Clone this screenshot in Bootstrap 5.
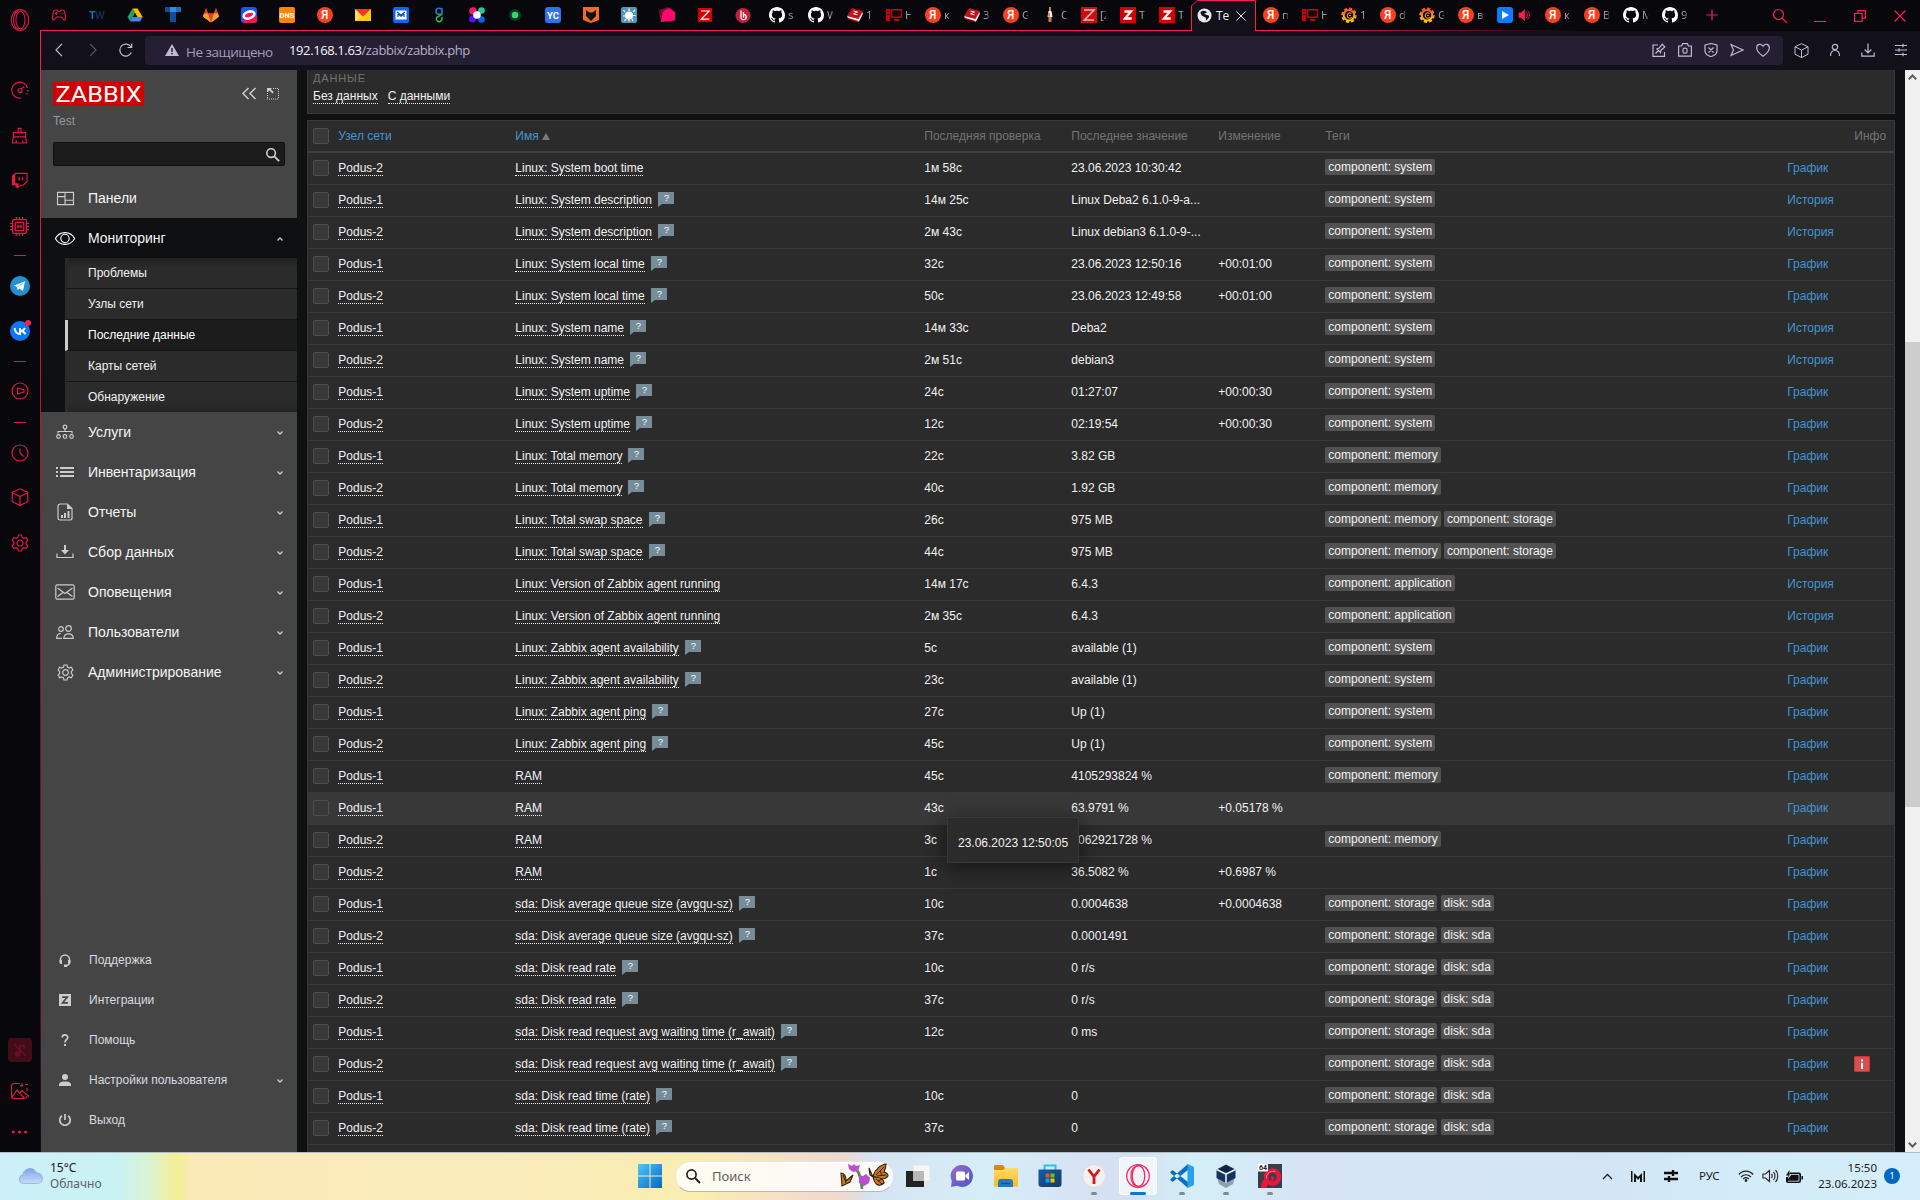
<!DOCTYPE html>
<html lang="ru">
<head>
<meta charset="utf-8">
<title>Test: Последние данные</title>
<meta name="viewport" content="width=device-width, initial-scale=1">
<link href="https://cdn.jsdelivr.net/npm/bootstrap@5.3.0/dist/css/bootstrap.min.css" rel="stylesheet">
<style>
:root{--gx:#fa1e4e;--gxd:#e01b46;--page:#0e1012;--panel:#2b2b2b;--line:#383838;--side:#454545}
html,body{height:100%}
body{margin:0;width:1920px;height:1200px;overflow:hidden;background:var(--page);font:12px/16px "Liberation Sans",Arial,sans-serif;color:#f2f2f2}
svg{display:block;flex:none;overflow:visible}
.ln{fill:none;stroke:currentColor;stroke-width:1.2}
.screen-top{height:1152px}
/* browser rail */
.rail{width:40px;background:#07070c;color:var(--gxd);padding-top:10px}
.rail-slot{width:39px;flex:none}
.rail-dash{width:12px;height:1px;background:var(--gxd);margin:0 14px}
.rail-mute{width:24px;height:24px;border-radius:4px;background:#430c19;color:#6a1024;margin-left:8px}
.vk-box{position:relative}
.vk-dot{position:absolute;right:-1px;top:-1px;width:6px;height:6px;border-radius:50%;background:#fa1e4e}
/* tab strip */
.browser{width:1880px}
.strip{height:31px;background:#07070c;position:relative;font:12px/16px "Open Sans","Noto Sans",sans-serif;color:#a3a3ab}
.strip::after{content:"";position:absolute;left:0;right:0;bottom:0;height:1px;background:linear-gradient(90deg,var(--gx) 66%,rgba(250,30,78,0) 82%)}
.pin{width:38px;height:30px;flex:none;color:var(--gxd)}
.tabx{width:39px;height:30px;flex:none;padding-left:7px;white-space:nowrap}
.tabx span{width:9px;margin-left:3px;font-size:11.5px;-webkit-mask-image:linear-gradient(90deg,#000 45%,transparent 75%);mask-image:linear-gradient(90deg,#000 45%,transparent 75%)}
.tab-live{width:65px;height:31px;position:relative;z-index:2;color:#e8e8ee;padding-left:6px;flex:none}
.tab-live>svg:first-child{position:absolute;left:0;top:0}
.tab-live span{width:13px;margin-left:4px;position:relative}
.tab-live svg{position:relative}
.winbtn{color:var(--gx)}
.winslot{width:40px}
.toolbar{height:39px;background:#121019;color:#c0b9d6;padding:4px 0 5px 0}
.nav-back{margin-left:15px}.nav-fwd{margin:0 22px 0 26px;color:#5b566b}
.addr{width:1638px;height:29px;margin-left:12px;background:#241f33;border-radius:4px;padding:0 7px 0 20px;font-family:"Open Sans","Noto Sans",sans-serif}
.addr .warn-txt{font-size:13.5px;color:#a49dbb;margin-left:7px;width:103px;letter-spacing:-.5px;padding-top:3px}
.addr .url{font-size:13px;color:#b6b0c8;letter-spacing:-.39px}
.addr .url b{font-weight:500;color:#f4f2fa}
.tool{width:26px}
.ext-tools{margin-left:11px;gap:19px}
.edge{border-left:1px solid transparent;position:relative}
.edge::before{content:"";position:absolute;z-index:3;left:-1px;top:-39px;height:1121px;width:1px;background:linear-gradient(#fa1e4e,#b31538 35%,#4a0c1c 88%,rgba(60,8,20,0))}
/* zabbix sidebar */
.zside{width:256px;background:var(--side);height:1082px}
.zhead{padding:12px 18px 0 12px}
.zhead-ic{margin-top:4px;color:#ccc}
.zlogo{width:91px;height:24px;background:#d40000}
.zlogo text{font:400 22px Roboto,"Liberation Sans",sans-serif;fill:#fff}
.zname{padding:7px 12px 13px;height:36px;color:#8d979e}
.zsearch{margin:0 12px;height:24px;background:#1c1c1c;border:1px solid #0b1013;border-radius:2px;padding-right:4px;color:#ccc}
.mitem{height:40px;padding-left:12px;font-size:14px;color:#f5f5f5}
.mitem>span,.bitem>span{flex:1}
.micon{width:24px;margin-right:11px;display:flex;justify-content:center;color:#ccc}
.chev{margin:2px 14px 0 0;color:#ccc}
.mopen{background:#0e0f10}
.msub{background:#0e1012;padding-left:24px}
.msub .sublink{display:block;height:31px;line-height:31px;padding-left:20px;border-left:3px solid var(--panel);background:var(--panel);border-bottom:1px solid #161616;color:#f2f2f2;text-decoration:none}
.msub .sublink:first-child{background:linear-gradient(#202020,var(--panel) 10px);border-left-color:#282828}
.msub .sublink:last-child{height:30px;border-bottom:0;background:linear-gradient(var(--panel) 20px,#232323)}
.msub .sublink.cur{background:#1c1c1c;border-left-color:#ccc;color:#fff}
.bitem{height:40px;padding-left:12px;font-size:12px;color:#d8dce0}
.bitem .micon{margin-right:12px}
/* main */
.zmain{width:1608px;padding:0 0 0 10px;background:var(--page);height:1082px;overflow:hidden;position:relative}
.zfilter{width:1588px;height:44px;background:var(--panel);border:1px solid var(--line);border-top:0;padding-left:5px}
.zfilter h6{margin:0;font:11px/16px "Liberation Sans",sans-serif;letter-spacing:.85px;color:#737373}
.lk{color:#f2f2f2;text-decoration:none;border-bottom:1px dotted #f2f2f2;line-height:14px;display:inline-block}
.zbox{width:1588px;margin-top:6px;border:1px solid var(--line);background:var(--panel);height:1040px;overflow:hidden}
.ztable{table-layout:fixed;width:1586px;border-collapse:separate;border-spacing:0;margin:0;--bs-table-bg:transparent;--bs-table-color:#f2f2f2;color:#f2f2f2}
.ztable th,.ztable td{height:32px;padding:0 5px 1px 5.3px;border:0;border-bottom:1px solid var(--line);vertical-align:middle;white-space:nowrap;overflow:hidden;line-height:16px;box-shadow:none;color:#f2f2f2}
.ztable thead th{border-bottom:2px solid #414141;font-weight:400;color:#737373;padding-bottom:0}
.ztable th:first-child,.ztable td:first-child{padding-left:5px}
.ztable a.act{color:#4594d0;text-decoration:none}
.ztable tr.hov td{background:#383838}
.ztable .lk{vertical-align:top;padding-top:1px;line-height:14px}
.cbx{display:block;width:16px;height:16px;border:1px solid #4f4f4f;background:#383838;border-radius:2px}
.hint{display:inline-block;margin-left:6px;vertical-align:top}
#hinti text{font:9.5px "Liberation Sans",sans-serif;fill:#fff}
.tagx{display:inline-block;background:#525252;border-radius:2px;height:16px;line-height:16px;padding:0 3px;margin-right:3.2px;vertical-align:top;position:relative;top:-1px}
.infox{width:16px;height:16px;background:#d64e4e;border:1px solid #c23636;border-radius:1px}
.ztip{position:absolute;left:650px;top:747px;width:132px;height:46px;padding-left:10px;line-height:50px;background:var(--panel);border:1px solid #383838;box-shadow:0 4px 20px rgba(0,0,0,.55);z-index:5}
.zscroll{width:15px;background:#f0f0f0;color:#606060;height:1082px}
.sc-up{height:272px;padding:4px 3px}
.zthumb{height:465px;background:#cdcdcd}
.sc-dn{height:345px;padding:335px 3px 0}
/* windows taskbar */
.taskbar{height:48px;border-top:1px solid #b3bcc4;padding-bottom:1px;color:#1b1b1b;font:12px/16px "Noto Sans","Open Sans",sans-serif;background:linear-gradient(90deg,#cdeff8 0,#c9f3f3 120px,#dcf3d0 150px,#f5ee93 178px,#faeab8 190px,#faebbb 500px,#f9edb0 700px,#f4dfc8 790px,#eed9cf 845px,#d6e3f2 870px,#d5eef8 985px,#d7e2f3 1080px,#d4e0f2 1130px,#d4eff8 1200px,#d6e4f4 1300px,#d3e5f5 1600px,#d2ecf8 1750px,#d5eef9 1920px)}
.tb-left{width:631px;padding-left:18px}
.tb-search{width:219px;height:31px;border-radius:16px;background:rgba(255,255,255,.82);border:1px solid rgba(190,190,190,.35);border-bottom-color:#b8b8b8;margin-left:6px;margin-right:2px;padding:0 4px 0 9px;color:#5d5d5d;font-size:13px}
.tb-app{width:44px;height:46px;position:relative}
.tb-app i{position:absolute;left:19px;bottom:4px;width:6px;height:3px;border-radius:2px;background:#838a91}
.tb-app.on i{left:14px;width:16px;background:#0078d4}
.tb-app.on::before{content:"";position:absolute;left:3px;top:4px;width:38px;height:38px;border-radius:4px;background:rgba(255,255,255,.65);border:1px solid rgba(255,255,255,.7)}
.tb-app svg{position:relative}
.tray>*{flex:none}
.tray-txt{font-size:11.5px}
.tb-badge{width:16px;height:16px;border-radius:50%;background:#0067c0;color:#fff;font-size:9px;line-height:16px;text-align:center}
</style>
<script src="https://cdn.jsdelivr.net/npm/bootstrap@5.3.0/dist/js/bootstrap.bundle.min.js"></script>
</head>
<body>
<svg width="0" height="0" class="position-absolute">
<defs>
<linearGradient id="gBlue" x1="0" y1="0" x2="1" y2="1"><stop offset="0" stop-color="#53c6f6"/><stop offset="1" stop-color="#0067c8"/></linearGradient>
<linearGradient id="gChat" x1="0" y1="0" x2="1" y2="1"><stop offset="0" stop-color="#9a6cc8"/><stop offset="1" stop-color="#4a55c8"/></linearGradient>
<linearGradient id="gFold" x1="0" y1="0" x2="0" y2="1"><stop offset="0" stop-color="#ffdc6b"/><stop offset="1" stop-color="#fbb91f"/></linearGradient>
<linearGradient id="gStore" x1="0" y1="0" x2="1" y2="1"><stop offset="0" stop-color="#0c5fa8"/><stop offset="1" stop-color="#1b3764"/></linearGradient>
<linearGradient id="gCloud" x1="0" y1="0" x2="0" y2="1"><stop offset="0" stop-color="#7ea5ea"/><stop offset="1" stop-color="#c9dcf8"/></linearGradient>
<linearGradient id="gGraf" x1="0" y1="0" x2="0" y2="1"><stop offset="0" stop-color="#f05a28"/><stop offset="1" stop-color="#fbca0a"/></linearGradient>
<linearGradient id="gS" x1="0" y1="0" x2="0" y2="1"><stop offset="0" stop-color="#1c6fd8"/><stop offset="1" stop-color="#38c44a"/></linearGradient>

<symbol id="pad" viewBox="0 0 16 16"><path class="ln" d="M4 3h2l1 1.500h2L10 3h2c1 0 1.500 1 1.800 2.500L14.600 11c.2 2-1.600 2.500-2.600 1L10.500 10h-5L4 12c-1 1.500-2.800 1-2.600-1l.8-5.500C2.500 4 3 3 4 3z"/><path class="ln" d="M5.300 5v3M3.800 6.500h3M9.500 6.500h.9M11.500 6.500h.9"/></symbol>
<symbol id="tw" viewBox="0 0 16 16"><text x="0" y="12" font-family="Roboto" font-size="11" font-weight="700" fill="#1a74aa">T</text><text x="6" y="12" font-family="Roboto" font-size="11" font-weight="500" fill="#1b2f50">W</text></symbol>
<symbol id="drive" viewBox="0 0 16 16"><path fill="#1ea362" d="M5.500 1.500 8 6 3.200 14 .5 10z"/><path fill="#ffba00" d="M5.500 1.500h5L15.700 10h-5.200z"/><path fill="#4285f4" d="M5.400 10h10.300L13 14.500H2.900z"/></symbol>
<symbol id="tt" viewBox="0 0 16 16"><path fill="#1b6fc0" d="M0 0h16v5H0z"/><path fill="#0f4f94" d="M0 0h5v5H0zM5 5h6v10H5z"/><path fill="#2f8be0" d="M5 0h6v5H5z"/></symbol>
<symbol id="gitlab" viewBox="0 0 16 16"><path fill="#e24329" d="M8 15.500 0 9.500 3 .5l2.200 6h5.600l2.200-6 3 9z"/><path fill="#fc6d26" d="M8 15.500 3.500 9 0 9.500zM8 15.500 12.500 9l3.500.5z"/><path fill="#fca326" d="M0 9.500 1 6.500h4.200L8 15.500zM16 9.500l-1-3h-4.200L8 15.500z"/><path fill="#e24329" d="M5.200 6.500h5.600L8 15.500z"/></symbol>
<symbol id="ozon" viewBox="0 0 16 16"><rect width="16" height="16" rx="3" fill="#0b5bff"/><path d="M2 12 16 9v4a3 3 0 0 1-3 3H3z" fill="#f91155"/><ellipse cx="8" cy="8" rx="5.500" ry="3.300" fill="#f91155" stroke="#fff" stroke-width="2.600" transform="rotate(-20 8 8)"/></symbol>
<symbol id="dns" viewBox="0 0 16 16"><rect width="16" height="16" rx="2" fill="#fc8507"/><text x="8" y="10.800" text-anchor="middle" font-family="Roboto" font-size="7.500" font-weight="700" fill="#fff">DNS</text></symbol>
<symbol id="ya" viewBox="0 0 16 16"><circle cx="8" cy="8" r="8" fill="#fc3f1d"/><text x="7.800" y="12.200" text-anchor="middle" font-family="Roboto" font-size="12" font-weight="500" fill="#fff">Я</text></symbol>
<symbol id="ymail" viewBox="0 0 16 16"><path fill="#ffcc00" d="M0 2h16v12H0z"/><path fill="#fff2a0" d="M0 2l8 8-8 4z" opacity=".5"/><path fill="#f8352c" d="M0 2h16L8 9.500z"/></symbol>
<symbol id="bmail" viewBox="0 0 16 16"><rect width="16" height="16" rx="2" fill="#0a66ff"/><rect x="2.500" y="3.500" width="11" height="9" fill="#fff"/><path d="M5 10V7l3 2.300L11 7v3M4 5l4 3 4-3" stroke="#0a56d8" fill="none" stroke-width="1.200"/></symbol>
<symbol id="ess" viewBox="0 0 16 16"><path d="M11 4a3 3 0 1 0-3 3.200h3M11 1v6c0 2-5.800 1.500-5.800 5a3 3 0 1 0 5.500-2" fill="none" stroke="url(#gS)" stroke-width="1.500"/></symbol>
<symbol id="flower" viewBox="0 0 16 16"><circle cx="4" cy="4" r="3.800" fill="#f51c62"/><circle cx="12.500" cy="3.500" r="3.300" fill="#2fc59b"/><circle cx="3.500" cy="12" r="3.500" fill="#5a13f0"/><circle cx="12.500" cy="12.500" r="3.300" fill="#0b63e8"/><circle cx="8" cy="8" r="3.800" fill="#fff"/></symbol>
<symbol id="greendot" viewBox="0 0 16 16"><circle cx="8" cy="8" r="6" fill="#0f3a22"/><circle cx="8" cy="8" r="3.300" fill="#36d66e"/></symbol>
<symbol id="yc" viewBox="0 0 16 16"><rect width="16" height="16" rx="3" fill="#2f73e8"/><text x="8" y="11.500" text-anchor="middle" font-family="Roboto" font-size="9.500" font-weight="700" fill="#fff">YC</text></symbol>
<symbol id="fox" viewBox="0 0 16 16"><path fill="#f36b21" d="M0 0h16v13l-8 3-8-3z"/><path fill="#111" d="M3 3l3.500 2.500h3L13 3v6l-5 5-5-5z"/></symbol>
<symbol id="splat" viewBox="0 0 16 16"><rect width="16" height="16" rx="2" fill="#5295b8"/><circle cx="8" cy="8.500" r="4" fill="#fff"/><path d="M8 4V1.500M4 5 2.500 3M12 5l2-2M4 9H2M12 8.500h2.500M5 12l-1.500 2M11 12l1 2M8 12v2.500" stroke="#fff" stroke-width="1.200"/></symbol>
<symbol id="pink" viewBox="0 0 16 16"><path fill="#7d0834" d="M0 3 9 0l3 3-9 4-2 7z"/><path fill="#ff0a6c" d="M4 4.500 10 1l6 4v8.500L1.500 15z"/></symbol>
<symbol id="zthin" viewBox="0 0 16 16"><path fill="#d40000" d="M1 1h14v14H1z"/><path d="M4 4h8.200l-8 8.200H12.300" stroke="#fff" fill="none" stroke-width="1.200"/></symbol>
<symbol id="zbig" viewBox="0 0 16 16"><path fill="#c90f0f" d="M0 0h16v16H0z"/><path d="M3 3h10L3.500 13H13" stroke="#e9b5b5" fill="none" stroke-width="1.600"/></symbol>
<symbol id="zbold" viewBox="0 0 16 16"><path fill="#d40000" d="M0 0h16v16H0z"/><path d="M4.500 4.500h6.500l-6 7H11.700" stroke="#fff" fill="none" stroke-width="2.300"/></symbol>
<symbol id="bred" viewBox="0 0 16 16"><circle cx="8" cy="8.500" r="7.500" fill="#c4203a"/><path d="M6 3.500v7a2.600 2.600 0 1 0 2.500-3M8.500 5v5.500" stroke="#fff" stroke-width="1.300" fill="none"/></symbol>
<symbol id="github" viewBox="0 0 16 16"><path fill="#fff" d="M8 0C3.580 0 0 3.580 0 8c0 3.540 2.290 6.530 5.470 7.590.4.070.55-.17.55-.38 0-.19-.01-.82-.01-1.490-2.010.37-2.530-.49-2.690-.94-.09-.23-.48-.94-.82-1.130-.28-.15-.68-.52-.01-.53.63-.01 1.080.58 1.230.82.72 1.210 1.870.87 2.330.66.07-.52.28-.87.51-1.070-1.780-.2-3.640-.89-3.640-3.950 0-.87.31-1.590.82-2.150-.08-.2-.36-1.020.08-2.120 0 0 .67-.21 2.200.82.640-.18 1.320-.27 2-.27s1.360.09 2 .27c1.530-1.040 2.200-.82 2.200-.82.440 1.100.160 1.920.080 2.120.510.560.820 1.270.820 2.150 0 3.070-1.870 3.750-3.650 3.950.290.250.540.730.540 1.480 0 1.070-.01 1.930-.01 2.200 0 .210.150.460.550.380A8.010 8.010 0 0 0 16 8c0-4.420-3.580-8-8-8"/></symbol>
<symbol id="book" viewBox="0 0 16 16"><path fill="#c3121c" d="M5 1l11 3-4 8L0 9z"/><path fill="#fff" d="M0 9l11.500 3L15.500 5l.3 2-4 8L1 11.500z"/><path fill="#8d0a12" d="M0 9l1 3.500L11.500 15.500V14L1.500 11z"/><path d="M6.500 4l4 1-4 1.800 4 1" stroke="#fff" fill="none" stroke-width=".9"/></symbol>
<symbol id="pcred" viewBox="0 0 16 16"><path fill="#d00000" d="M0 2h4v12H0zM5 2h11v9H5zM8 12h5v2H8z"/><path fill="#0b0b10" d="M6.200 3.500h8.600v6H6.200zM1 4h2v1H1zM1 7h2v1H1z"/></symbol>
<symbol id="lady" viewBox="0 0 16 16"><path fill="#c98a3a" d="M7 0h2v4H7z"/><path fill="#f2f2f2" d="M6.500 4h3l1 6H5.500z"/><path fill="#d8342c" d="M6.500 6h1.200v3.500H6.500z"/><path fill="#c3873d" d="M6.500 10h3v5h-3z"/></symbol>
<symbol id="globe" viewBox="0 0 16 16"><circle cx="8" cy="8" r="7.500" fill="#e9e9ee"/><path fill="#121019" d="M3.500 5C5 2 10 2.500 10.500 5L7.500 6l3 1.500c2 0 3 1 2 3L9.500 13.500V10.500L5 8z"/></symbol>
<symbol id="grafana" viewBox="0 0 16 16"><circle cx="8" cy="8.200" r="6.600" fill="none" stroke="url(#gGraf)" stroke-width="2.200" stroke-dasharray="3.200 1.960"/><circle cx="8" cy="8.200" r="5.200" fill="none" stroke="url(#gGraf)" stroke-width="2"/><path d="M11 10a2.600 2.600 0 1 1-.5-3.500M8 8.500h2" fill="none" stroke="#f58a1f" stroke-width="1.200"/></symbol>
<symbol id="playb" viewBox="0 0 16 16"><rect width="16" height="16" rx="3" fill="#0a7cff"/><path fill="#fff" d="M5 4l7 4-7 4z"/></symbol>
<symbol id="spk" viewBox="0 0 12 16"><path fill="#fa1e4e" d="M0 5h3l4-4v14l-4-4H0z"/><path d="M8.500 4.500c2 2 2 5 0 7M10 3c3 3 3 7 0 10" fill="none" stroke="#fa1e4e"/></symbol>

<symbol id="opera" viewBox="0 0 22 24"><ellipse class="ln" cx="11" cy="12" rx="9.600" ry="11.400"/><ellipse class="ln" cx="11.500" cy="12" rx="5" ry="9.600"/><path class="ln" d="M8.500 2.500c-6 2-6 17 0 19"/></symbol>
<symbol id="gauge" viewBox="0 0 18 18"><path class="ln" d="M10 17A8 8 0 1 1 16.500 7"/><path class="ln" stroke-dasharray="1.500 1.500" d="M16.800 9c0 3-1 4.500-2 5.500"/><circle class="ln" cx="9" cy="9.500" r="2"/><path class="ln" d="M10.300 8.200 13 5.500"/></symbol>
<symbol id="broom" viewBox="0 0 18 18"><path class="ln" d="M7.500 6V1.500h3V6M2.500 6h13v4.500h-13zM2.500 10.500 1.500 17h15l-1-6.500M5.500 17v-3M12.500 17v-3"/></symbol>
<symbol id="twitch" viewBox="0 0 18 18"><path class="ln" d="M2 4l3-2.500h12V10l-4 4h-3l-3 2.500V14H5"/><path fill="currentColor" d="M1 4l3.500-2.500V12H8v2l-2.500 3H5v-3H1zM8 5h1.400v4H8zM11.500 5h1.400v4h-1.400z"/></symbol>
<symbol id="cpu" viewBox="0 0 18 18"><rect class="ln" x="2.500" y="2.500" width="13" height="13" rx="1"/><rect class="ln" x="5" y="5" width="8" height="8" rx="1"/><path class="ln" d="M6 0v2M9 0v2M12 0v2M6 16v2M9 16v2M12 16v2M0 6h2M0 9h2M0 12h2M16 6h2M16 9h2M16 12h2M7.500 7v4M10.500 7v4M7.500 9h3"/></symbol>
<symbol id="tele" viewBox="0 0 20 20"><circle cx="10" cy="10" r="10" fill="#2391cf"/><path fill="#fff" d="M3.800 9.800 15 5.200l-2 9.800-3.500-2.500-1.800 1.800L7 11z"/><path d="M7 11l6-4-4.500 5" stroke="#a9cfe6" fill="none"/></symbol>
<symbol id="vk" viewBox="0 0 20 20"><circle cx="10" cy="10" r="10" fill="#0a78f5"/><path d="M4.500 7c.6 4 2.500 6 5.500 6V7M10 10c2 0 4-1 5-3M10.500 10c2.500 0 4 1.500 5 3.200" stroke="#fff" stroke-width="1.800" fill="none"/></symbol>
<symbol id="play" viewBox="0 0 18 18"><circle class="ln" cx="9" cy="9" r="8"/><path class="ln" d="M6.500 6v6l6.500-2V8z"/></symbol>
<symbol id="clock" viewBox="0 0 18 18"><circle class="ln" cx="9" cy="9" r="8"/><path class="ln" d="M9 4.500V9l3.500 3.500"/></symbol>
<symbol id="cube" viewBox="0 0 18 18"><path class="ln" d="M9 .8 16.800 4.500v9L9 17.500l-7.800-4v-9zM1.200 4.500 9 8.500l7.800-4M9 8.500v9"/></symbol>
<symbol id="gear" viewBox="0 0 18 18"><circle class="ln" cx="9" cy="9" r="3"/><path class="ln" d="M7.400 1h3.200l.5 2.300 1.900 1 2.200-.8 1.600 2.700L15.200 8v2l1.600 1.800-1.600 2.700-2.200-.8-1.900 1-.5 2.300H7.400l-.5-2.300-1.900-1-2.200.8-1.600-2.700L2.800 10V8L1.200 6.200l1.600-2.700 2.200.8 1.900-1z"/></symbol>
<symbol id="note" viewBox="0 0 18 18"><path d="M3 3l12 12" stroke="currentColor" stroke-width="1.300"/><circle cx="6.500" cy="13" r="2.800" fill="currentColor"/><path d="M9 13V4.500h4V8" stroke="currentColor" stroke-width="1.500" fill="none"/></symbol>
<symbol id="pic" viewBox="0 0 20 18"><path class="ln" d="M10 1.500H4A2.500 2.500 0 0 0 1.500 4v10A2.500 2.500 0 0 0 4 16.500h10a3 3 0 0 0 3-2.500M2 15l5-7 7 8M9.500 11.500l2.500-3 7 6M12 1v4M15 2.500h3M17 6v3M10 3.500h3" stroke-width="1.400"/></symbol>
<symbol id="dots" viewBox="0 0 18 4"><g fill="currentColor"><circle cx="2.500" cy="2" r="1.700"/><circle cx="9" cy="2" r="1.700"/><circle cx="15.500" cy="2" r="1.700"/></g></symbol>

<symbol id="mag" viewBox="0 0 16 16"><circle class="ln" cx="6.500" cy="6.500" r="5"/><path class="ln" d="M10 10l5 5"/></symbol>
<symbol id="magb" viewBox="0 0 16 16"><circle cx="6.500" cy="6.500" r="4.600" fill="none" stroke="currentColor" stroke-width="1.700"/><path d="M10 10l5 5" stroke="currentColor" stroke-width="2"/></symbol>
<symbol id="cx" viewBox="0 0 12 12"><path class="ln" d="M.5.5l11 11M11.500.5l-11 11"/></symbol>
<symbol id="plus" viewBox="0 0 12 12"><path class="ln" d="M6 .5v11M.5 6h11"/></symbol>
<symbol id="minw" viewBox="0 0 12 12"><path d="M0 11.500h12" stroke="currentColor" stroke-width="1.200"/></symbol>
<symbol id="rest" viewBox="0 0 12 12"><path class="ln" d="M.6 3.500h7.500V11.400H.6zM4 3.500V.6h7.400v7.500H8"/></symbol>
<symbol id="back" viewBox="0 0 8 14"><path class="ln" stroke-width="1.500" d="M7 .8 1 7l6 6.200"/></symbol>
<symbol id="fwd" viewBox="0 0 8 14"><path class="ln" d="M1 .8 7 7l-6 6.200"/></symbol>
<symbol id="reload" viewBox="0 0 14 14"><path class="ln" stroke-width="1.400" d="M12.300 9.500A6 6 0 1 1 12 4M12.700.5v4H8.500"/></symbol>
<symbol id="warn" viewBox="0 0 14 12"><path fill="#c0b9d6" d="M7 0l7 12H0z"/><path d="M7 4v4M7 9v1.500" stroke="#241f33" stroke-width="1.400"/></symbol>
<symbol id="pinic" viewBox="0 0 14 14"><path class="ln" d="M6 2H1v11.300h11.500V9M3.500 10.500l3-3M5 6l3.500 3.500.5-2.300L12.800 4 10.300 1.200 7.200 5z"/></symbol>
<symbol id="cam" viewBox="0 0 14 14"><path class="ln" d="M.6 3h3l1-2.300h4.800l1 2.300h3v10.200H.6z"/><rect class="ln" x="5" y="5.200" width="4" height="5" rx="1.500"/></symbol>
<symbol id="shield" viewBox="0 0 14 14"><path class="ln" d="M1 2 7 .5 13 2v6c0 3-3 4.700-6 5.700C4 12.700 1 11 1 8zM4.500 4.500l5 5M9.500 4.500l-5 5"/></symbol>
<symbol id="send" viewBox="0 0 14 14"><path class="ln" d="M1 1.500 13 7 1 12.500 3.500 7z"/></symbol>
<symbol id="heart" viewBox="0 0 14 14"><path class="ln" d="M7 13.200C3 10.500.7 8 .7 4.800.7 1 5 0 7 3.200 9 0 13.300 1 13.300 4.800 13.300 8 11 10.500 7 13.200z"/></symbol>
<symbol id="user" viewBox="0 0 14 14"><circle class="ln" cx="7" cy="4" r="2.700"/><path class="ln" d="M2.500 13c0-4 2-5.500 4.500-5.500s4.500 1.500 4.500 5.500"/></symbol>
<symbol id="dl" viewBox="0 0 14 14"><path class="ln" d="M7 .5v9M3.700 6.500 7 9.800l3.300-3.300M.8 9.500v3.700h12.400V9.500"/></symbol>
<symbol id="sliders" viewBox="0 0 14 14"><path class="ln" d="M1 2.500h12M1 7h12M1 11.500h12M9 .8v3.400M5 5.300v3.400M9 9.800v3.400"/></symbol>

<symbol id="m-dash" viewBox="0 0 20 16"><path class="ln" stroke-width="1.500" d="M1.500 1.500h17v13h-17zM9.500 1.500v13M1.500 6h8M9.500 9.800h9"/></symbol>
<symbol id="m-eye" viewBox="0 0 24 18"><path class="ln" stroke-width="1.500" d="M1.500 9C6 .5 18 .5 22.500 9 18 17.500 6 17.500 1.500 9z"/><circle class="ln" stroke-width="1.500" cx="12" cy="9" r="4.600"/></symbol>
<symbol id="m-serv" viewBox="0 0 18 16"><g class="ln"><circle cx="9" cy="3" r="1.800"/><circle cx="2.500" cy="12.500" r="1.800"/><circle cx="9" cy="12.500" r="1.800"/><circle cx="15.500" cy="12.500" r="1.800"/><path d="M9 5v3M2 9.500V7.500h14v2"/></g></symbol>
<symbol id="m-list" viewBox="0 0 18 12"><path d="M0 2h2M4 2h14M0 6h2M4 6h14M0 10h2M4 10h14" stroke="currentColor" stroke-width="1.900"/></symbol>
<symbol id="m-rep" viewBox="0 0 16 18"><path class="ln" stroke-width="1.400" d="M3 1h7.500L15 5.500V15a2 2 0 0 1-2 2H3a2 2 0 0 1-2-2V3a2 2 0 0 1 2-2z"/><path fill="currentColor" d="M10 1v5h5zM4 12h2v3H4zM7 10h2v5H7zM10.500 8h2v7h-2z"/></symbol>
<symbol id="m-down" viewBox="0 0 18 14"><path d="M9 0v6" stroke="currentColor" stroke-width="2"/><path fill="currentColor" d="M5 5h8L9 9.500z"/><path class="ln" stroke-width="1.900" d="M1 8.500v4h16v-4"/></symbol>
<symbol id="m-mail" viewBox="0 0 20 16"><rect class="ln" x=".8" y=".8" width="18.400" height="14.400" rx="1.500"/><path class="ln" d="M2.500 4l7.500 5.500L17.500 4M2.500 12.500 8 8.500M17.500 12.500 12 8.500"/></symbol>
<symbol id="m-users" viewBox="0 0 18 14"><g class="ln"><circle cx="12.500" cy="3.500" r="2.800"/><circle cx="5" cy="4" r="2.300"/><path d="M7.800 13.300c0-3 2-4.500 4.700-4.500s4.700 1.500 4.700 4.500zM6 13.300H.7C.7 10 2.500 8.500 5 8.500"/></g></symbol>
<symbol id="m-head" viewBox="0 0 12 13"><path d="M1.500 7.500V5.500a4.500 4.500 0 0 1 9 0v3c0 2-1.500 3-4 3.200" fill="none" stroke="currentColor" stroke-width="1.500"/><path fill="currentColor" d="M.5 6h2.500v4H1.500l-1-1zM9 6h2.500v3l-1 1H9zM5 10.500h3V13H5z"/></symbol>
<symbol id="m-z" viewBox="0 0 12 12"><path fill="currentColor" d="M0 0h12v12H0z"/><path d="M3.200 3.200h5l-4.600 5.600h5.300" stroke="#454545" stroke-width="1.700" fill="none"/></symbol>
<symbol id="m-q" viewBox="0 0 8 12"><path d="M1.200 3.500C1.200 0 6.800 0 6.800 3.500 6.800 5.500 4 5.500 4 8.500" fill="none" stroke="currentColor" stroke-width="1.700"/><path fill="currentColor" d="M3 10h2v2H3z"/></symbol>
<symbol id="m-user" viewBox="0 0 12 12"><circle cx="6" cy="3" r="3" fill="currentColor"/><path fill="currentColor" d="M0 12V10c1-2 3-2.500 6-2.500s5 .5 6 2.500v2z"/></symbol>
<symbol id="m-pow" viewBox="0 0 12 12"><path d="M3 1.800a5.200 5.200 0 1 0 6 0M6 0v6" fill="none" stroke="currentColor" stroke-width="1.700"/></symbol>
<symbol id="cdn" viewBox="0 0 6 4"><path d="M.5.5 3 3 5.500.5" fill="none" stroke="currentColor" stroke-width="1.300"/></symbol>
<symbol id="cup" viewBox="0 0 6 4"><path d="M.5 3.500 3 1l2.500 2.500" fill="none" stroke="currentColor" stroke-width="1.300"/></symbol>
<symbol id="hinti" viewBox="0 0 16 15"><path fill="#768d99" d="M0 0h16v12H4l-4 3z"/><text x="8.500" y="9" text-anchor="middle">?</text></symbol>
</defs></svg>

<div class="screen-top d-flex">
  <aside class="rail d-flex flex-column" id="rail"></aside>
  <div class="browser d-flex flex-column">
    <div class="strip d-flex" id="strip"></div>
    <div class="toolbar d-flex align-items-center">
      <svg class="nav-back" width="8" height="14"><use href="#back"/></svg>
      <svg class="nav-fwd" width="8" height="14"><use href="#fwd"/></svg>
      <svg width="14" height="14"><use href="#reload"/></svg>
      <div class="addr d-flex align-items-center">
        <svg width="14" height="12"><use href="#warn"/></svg>
        <span class="warn-txt">Не защищено</span>
        <span class="url flex-grow-1"><b>192.168.1.63</b>/zabbix/zabbix.php</span>
        <span class="tool d-flex justify-content-center"><svg width="14" height="14"><use href="#pinic"/></svg></span>
        <span class="tool d-flex justify-content-center"><svg width="14" height="14"><use href="#cam"/></svg></span>
        <span class="tool d-flex justify-content-center"><svg width="14" height="14"><use href="#shield"/></svg></span>
        <span class="tool d-flex justify-content-center"><svg width="14" height="14"><use href="#send"/></svg></span>
        <span class="tool d-flex justify-content-center"><svg width="14" height="14"><use href="#heart"/></svg></span>
      </div>
      <div class="d-flex ext-tools">
        <svg width="15" height="15"><use href="#cube"/></svg>
        <svg width="14" height="14"><use href="#user"/></svg>
        <svg width="14" height="14"><use href="#dl"/></svg>
        <svg width="14" height="14"><use href="#sliders"/></svg>
      </div>
    </div>
    <div class="d-flex edge">
      <nav class="zside d-flex flex-column">
        <div class="zhead d-flex align-items-start">
          <svg class="zlogo" width="91" height="24"><text x="2.500" y="20" textLength="86" lengthAdjust="spacingAndGlyphs">ZABBIX</text></svg>
          <svg class="zhead-ic ms-auto me-2" width="18" height="15" viewBox="0 0 18 15"><path d="M7.500 2 2 7.500 7.500 13M14.500 2 9 7.500l5.500 5.500" fill="none" stroke="currentColor" stroke-width="1.500"/></svg>
          <svg class="zhead-ic" width="12" height="14" viewBox="0 0 12 14"><path d="M6 2.500h6M11.500 3v10M.5 7v6M0 13h12" fill="none" stroke="currentColor" stroke-dasharray="1 1"/><path fill="currentColor" d="M0 2h5L3.800 3.300l3 3L5.500 7.500l-3-3L.5 6H0z"/></svg>
        </div>
        <div class="zname">Test</div>
        <div class="zsearch d-flex align-items-center justify-content-end"><svg width="15" height="15"><use href="#magb"/></svg></div>
        <div class="pt-2 mt-1" id="menu"></div>
        <div class="mt-auto pb-2 mb-1" id="menu2"></div>
      </nav>
      <main class="zmain">
        <div class="zfilter">
          <h6>ДАННЫЕ</h6>
          <div class="d-flex" style="gap:10px;padding-top:3px"><a class="lk">Без данных</a><a class="lk">С данными</a></div>
        </div>
        <div class="zbox">
          <table class="table ztable">
            <colgroup><col style="width:25px"><col style="width:177px"><col style="width:409px"><col style="width:147px"><col style="width:147px"><col style="width:107px"><col style="width:462px"><col style="width:67px"><col style="width:45px"></colgroup>
            <thead><tr><th><i class="cbx"></i></th><th><a class="act">Узел сети</a></th><th><a class="act">Имя</a> <svg class="d-inline-block" width="8" height="7" viewBox="0 0 8 7"><path fill="#7a7a7a" d="M4 0l4 7H0z"/></svg></th><th>Последняя проверка</th><th>Последнее значение</th><th>Изменение</th><th>Теги</th><th></th><th>Инфо</th></tr></thead>
            <tbody id="rows"></tbody>
          </table>
        </div>
        <div class="ztip">23.06.2023 12:50:05</div>
      </main>
      <div class="zscroll">
        <div class="sc-up"><svg width="9" height="6" viewBox="0 0 9 6"><path d="M.8 5.200 4.500 1.500l3.700 3.700" fill="none" stroke="currentColor" stroke-width="2"/></svg></div>
        <div class="zthumb"></div>
        <div class="sc-dn"><svg width="9" height="6" viewBox="0 0 9 6"><path d="M.8.8 4.500 4.500 8.200.8" fill="none" stroke="currentColor" stroke-width="2"/></svg></div>
      </div>
    </div>
  </div>
</div>

<footer class="taskbar d-flex align-items-center">
  <div class="tb-left d-flex align-items-center">
    <svg width="25" height="16" viewBox="0 0 25 16"><path fill="url(#gCloud)" stroke="#86a8e6" stroke-width=".7" d="M5 15.500a4.500 4.500 0 0 1-.3-8.800C5.500 2.500 9 .5 12 .5c3.500 0 5.500 2 6.500 4.500 3.500-.3 6 2 6 5.200 0 3-2 5.300-5 5.300z"/></svg>
    <div style="margin-left:7px"><div>15°C</div><div style="color:#5c6066">Облачно</div></div>
  </div>
  <div class="tb-app d-flex align-items-center justify-content-center" style="width:38px"><svg width="24" height="24"><path fill="url(#gBlue)" d="M0 0h11.500v11.500H0zM12.500 0H24v11.500H12.500zM0 12.500h11.500V24H0zM12.500 12.500H24V24H12.500z"/></svg></div>
  <div class="tb-search d-flex align-items-center">
    <svg width="16" height="16" style="color:#222"><use href="#magb"/></svg><span class="flex-grow-1" style="margin-left:11px">Поиск</span>
    <svg width="49" height="27" viewBox="0 0 49 27"><path d="M16 6c4 4 5 10 6 20M22 24c0-6 2-8 4-10" stroke="#4f8b3d" stroke-width="2.500" fill="none"/><path fill="#b84fd0" d="M8 1l4 2 2-2 2 2 4-1-2 6-5 1-4-3zM19 12l4 1 3-2 4 4-1 5-5 3-5-3z"/><g fill="#c97820" stroke="#33200f" stroke-width="1.100"><path d="M1 10c4 0 5 4 5 8l7-6-3 7-8 4z"/><path d="M33 13C35 6 42 1 46 1c0 4-1 6-2 8 3 1 4 3 4 4-3 4-8 4-15 0z"/><path d="M33 14c6 0 11 2 11 6-4 4-9 3-11-6zM33 14l-4-9 1 7z"/></g><path d="M36 12l8-8M37 13l9-1M36 16l6 5M3 12l3 8M40 8l2 4M38 18l4-2" stroke="#33200f"/></svg>
  </div>
  <div class="tb-app d-flex align-items-center justify-content-center"><svg width="24" height="24"><path fill="#f6f6f6" stroke="#ddd" stroke-width=".5" d="M7 1h17v16H7z"/><path fill="#222" d="M0 7h18v16H0z"/><path fill="#b9b9b9" d="M7 7h11v10H7z"/></svg></div>
  <div class="tb-app d-flex align-items-center justify-content-center"><svg width="24" height="24"><path fill="url(#gChat)" d="M12 1a11 11 0 1 1-5 20.800L1 23l.8-6A11 11 0 0 1 12 1z"/><rect x="6" y="7.500" width="9" height="9" rx="1.500" fill="#fff"/><path fill="#fff" d="M15.500 11 19 8v8l-3.500-3z"/></svg></div>
  <div class="tb-app d-flex align-items-center justify-content-center"><svg width="24" height="24"><path fill="#d58b0b" d="M1 1h8l2 3v3H0V2z"/><path fill="url(#gFold)" d="M0 6h9l2-2h12q1 0 1 1v17.500H0z"/><path fill="#1f7cc4" d="M4 23v-5q0-3 3-3h9q3 0 3 3v5z"/><path d="M7 19.500h9" stroke="#0c5494" stroke-width="1.500"/></svg></div>
  <div class="tb-app d-flex align-items-center justify-content-center"><svg width="24" height="24"><path d="M6.500 6V1.500h11V6" stroke="#2cc0f0" stroke-width="2" fill="none"/><path fill="url(#gStore)" d="M.5 5.500h23V20a3 3 0 0 1-3 3h-17a3 3 0 0 1-3-3z"/><path fill="#f25022" d="M7.500 9.500h4v4h-4z"/><path fill="#7fba00" d="M12.500 9.500h4v4h-4z"/><path fill="#00a4ef" d="M7.500 14.500h4v4h-4z"/><path fill="#ffb900" d="M12.500 14.500h4v4h-4z"/></svg></div>
  <div class="tb-app d-flex align-items-center justify-content-center"><svg width="24" height="24"><circle cx="12" cy="12" r="11.300" fill="#f3f1f0" stroke="#d9d4d2" stroke-width=".6"/><path d="M6.500 5.500 12 12.500 17.500 5.500M12 12v8" stroke="#d3171e" stroke-width="2.800" fill="none"/></svg><i></i></div>
  <div class="tb-app on d-flex align-items-center justify-content-center"><svg width="24" height="24" viewBox="0 0 24 24" fill="none" stroke="#f4285c" stroke-width="1.300"><circle cx="12" cy="12" r="11.300"/><ellipse cx="12.500" cy="12" rx="6.300" ry="10.500"/><path d="M9.500 2.500c-6 3-6 16 0 19"/></svg><i></i></div>
  <div class="tb-app d-flex align-items-center justify-content-center"><svg width="24" height="24"><path fill="#0a6fbe" d="M0 8.500 2.500 6 18 18v6zM0 15.500 2.500 18 18 6V0z"/><path fill="#27a0ee" d="M17.500 0 24 3v18l-6.500 3z"/></svg><i></i></div>
  <div class="tb-app d-flex align-items-center justify-content-center"><svg width="24" height="24"><path fill="#8ea0b4" d="M3 13l9 5 9-5-2 7-7 4-7-4z"/><path fill="#16325f" d="M12 .5l9.500 5V14L12 19 2.500 14V5.500z"/><path fill="#0d2145" d="M12 2l7 3.500-7 3.500-7-3.500z"/><path d="M2.500 5.500 12 10l9.500-4.500M12 10v9" stroke="#e8eef5" stroke-width="1.600" fill="none"/></svg><i></i></div>
  <div class="tb-app d-flex align-items-center justify-content-center"><svg width="24" height="24"><path fill="#3a3c48" d="M0 0h24v24H0z"/><circle cx="14.500" cy="13" r="6.500" fill="none" stroke="#e3173f" stroke-width="4.600"/><path fill="#e3173f" d="M3 24c0-6 2-9 6-11l2 6c-2 1-2 3-2 5z"/><path fill="#e3173f" d="M13 12a3 3 0 0 1 3.500 3l-3 3z"/><path d="M8.500 14a6.500 6.500 0 0 1 9-6.300" fill="none" stroke="#ff7d8e"/><path fill="#fff" d="M0 0h10v7.500H0z"/><text x="5" y="6.300" text-anchor="middle" font-family="Roboto" font-weight="700" font-size="7" fill="#222">64</text></svg><i></i></div>
  <div class="tray d-flex align-items-center ms-auto" style="padding-right:20px">
    <svg width="11" height="7" viewBox="0 0 11 7"><path d="M1 6l4.500-4.500L10 6" fill="none" stroke="#222" stroke-width="1.300"/></svg>
    <svg width="14" height="11" viewBox="0 0 14 11" style="margin-left:18px"><path fill="#111" d="M0 0h1.500v11H0zM12.500 0H14v11h-1.500zM3 2l4 4 4-4v9H9V6.500L7 9 5 6.500V11H3z"/></svg>
    <svg width="14" height="12" viewBox="0 0 14 12" style="margin-left:19px"><path d="M0 3h14M0 9h14M9 0v6M5 6v6" stroke="#111" stroke-width="2.300"/></svg>
    <span class="tray-txt" style="margin-left:21px;width:27px">РУС</span>
    <svg width="16" height="12" viewBox="0 0 16 12" style="margin-left:12px" fill="none" stroke="#222" stroke-width="1.200"><path d="M.8 4.500c4-4.500 10.400-4.500 14.400 0M3 7c3-3 7-3 10 0M5.200 9c2-1.800 3.600-1.800 5.600 0"/><circle cx="8" cy="10.500" r=".8"/></svg>
    <svg width="17" height="14" viewBox="0 0 17 14" style="margin-left:8px" fill="none" stroke="#222" stroke-width="1.100"><path d="M1 5h2.500L7.500 1.500v11L3.500 9H1zM9.500 5c1 1 1 3 0 4M11.500 3c2 2 2 6 0 8M13.500 1c3 3 3 9 0 12"/></svg>
    <svg width="17" height="13" viewBox="0 0 17 13" style="margin-left:7px"><path fill="#111" d="M4 2.500h9a2 2 0 0 1 2 2V11a2 2 0 0 1-2 2H2a2 2 0 0 1-2-2V7h3zM15.500 6H17v3.500h-1.500zM3.500 0 0 5.500h2.500L2 9l4-5H3.500z"/><path stroke="#d3eaf7" stroke-width=".8" fill="none" d="M2 11.200h11V4.500H6"/></svg>
    <div class="tray-txt text-end" style="margin-left:10px;width:64px"><div>15:50</div><div>23.06.2023</div></div>
    <span class="tb-badge" style="margin-left:7px">1</span>
  </div>
</footer>

<script>
const ic=(n,w,h)=>`<svg width="${w}" height="${h||w}"><use href="#${n}"/></svg>`;

/* rail: [icon, width, height, centre line] */
const rail=[['opera',20,22,20],['gauge',18,18,90],['broom',17,17,135],['twitch',17,17,180],['cpu',19,19,226],['-',0,1,255.5],['tele',20,20,286],['vk',20,20,331],['-',0,1,361.5],['play',18,18,391],['-',0,1,422.5],['clock',18,18,452.5],['cube',18,18,497],['gear',18,18,542.5],['mute',24,24,1050],['pic',20,18,1091],['dots',17,4,1132]];
let y=10,rh='';
for(const [n,w,h,c] of rail){const top=Math.round(c-h/2),gap=top-y;
  if(n==='-')rh+=`<div class="rail-dash flex-shrink-0" style="margin-top:${gap}px"></div>`;
  else if(n==='mute')rh+=`<div class="rail-mute d-flex align-items-center justify-content-center flex-shrink-0" style="margin-top:${gap}px">${ic('note',18)}</div>`;
  else rh+=`<div class="rail-slot d-flex justify-content-center" style="margin-top:${gap}px">${n==='vk'?`<div class="vk-box">${ic(n,w,h)}<i class="vk-dot"></i></div>`:ic(n,w,h)}</div>`;
  y=top+h;}
document.getElementById('rail').innerHTML=rh;

/* tab strip */
const pins=['pad','tw','drive','tt','gitlab','ozon','dns','ya','ymail','bmail','ess','flower','greendot','yc','fox','splat','pink','zthin','bred'];
const tabs=[['github','s'],['github','W'],['book','1'],['pcred','Н'],['ya','к'],['book','3'],['ya','G'],['lady','С'],['zbig','[Z'],['zbold','Т'],['zbold','Т']];
const tabs2=[['ya','п'],['pcred','Н'],['grafana','1'],['ya','d'],['grafana','G'],['ya','в'],['playb',''],['ya','к'],['ya','В'],['github','М'],['github','9']];
const tab=([i,t])=>i==='playb'?`<div class="tabx d-flex align-items-center" style="width:48px">${ic(i,16)}<b style="width:5px"></b>${ic('spk',12,14)}</div>`:`<div class="tabx d-flex align-items-center">${ic(i,16)}<span>${t}</span></div>`;
const win=s=>`<div class="winslot d-flex justify-content-center">${s}</div>`;
document.getElementById('strip').innerHTML=pins.map(p=>`<div class="pin d-flex align-items-center justify-content-center">${ic(p,16)}</div>`).join('')
 +tabs.map(tab).join('')
 +`<div class="tab-live d-flex align-items-center"><svg width="65" height="31"><path fill="#121019" d="M.5 31V6L6 .5h58.500V31z"/><path fill="none" stroke="#fa1e4e" d="M.5 31V6L6 .5h58.500V31"/></svg>${ic('globe',15)}<span>Те</span><b style="width:7px"></b>${ic('cx',10)}</div>`
 +tabs2.map(tab).join('')
 +`<div class="d-flex align-items-center winbtn" style="margin-left:12px;padding-bottom:2px">${ic('plus',12)}</div>`
 +`<div class="d-flex align-items-center winbtn ms-auto">${win(ic('mag',16))}${win(ic('minw',12))}${win(ic('rest',12))}${win(ic('cx',12))}</div>`;

/* zabbix menu */
const chev=d=>`<svg class="chev" width="6" height="4"><use href="#${d}"/></svg>`;
const mi=(i,w,h,t,c)=>`<div class="mitem d-flex align-items-center ${c==='cup'?'mopen':''}"><div class="micon" ${c==='cup'?'style="color:#fff"':''}>${ic(i,w,h)}</div><span>${t}</span>${c?chev(c):''}</div>`;
document.getElementById('menu').innerHTML=mi('m-dash',19,15,'Панели')+mi('m-eye',22,17,'Мониторинг','cup')
 +'<div class="msub"><a class="sublink">Проблемы</a><a class="sublink">Узлы сети</a><a class="sublink cur">Последние данные</a><a class="sublink">Карты сетей</a><a class="sublink">Обнаружение</a></div>'
 +mi('m-serv',18,16,'Услуги','cdn')+mi('m-list',18,12,'Инвентаризация','cdn')+mi('m-rep',16,18,'Отчеты','cdn')+mi('m-down',18,14,'Сбор данных','cdn')+mi('m-mail',20,16,'Оповещения','cdn')+mi('m-users',18,14,'Пользователи','cdn')+mi('gear',17,17,'Администрирование','cdn');
document.getElementById('menu2').innerHTML=[['m-head',12,13,'Поддержка'],['m-z',12,12,'Интеграции'],['m-q',8,12,'Помощь'],['m-user',12,12,'Настройки пользователя','cdn'],['m-pow',12,12,'Выход']]
 .map(([i,w,h,t,c])=>`<div class="bitem d-flex align-items-center"><div class="micon">${ic(i,w,h)}</div><span>${t}</span>${c?chev(c):''}</div>`).join('');

/* host, name, hint, last check, value, change, tags, action */
const S='component: system',M='component: memory',T='component: storage',A='component: application',D='disk: sda';
const rows=[
[2,'Linux: System boot time',0,'1м 58с','23.06.2023 10:30:42','',[S],0],
[1,'Linux: System description',1,'14м 25с','Linux Deba2 6.1.0-9-a...','',[S],1],
[2,'Linux: System description',1,'2м 43с','Linux debian3 6.1.0-9-...','',[S],1],
[1,'Linux: System local time',1,'32с','23.06.2023 12:50:16','+00:01:00',[S],0],
[2,'Linux: System local time',1,'50с','23.06.2023 12:49:58','+00:01:00',[S],0],
[1,'Linux: System name',1,'14м 33с','Deba2','',[S],1],
[2,'Linux: System name',1,'2м 51с','debian3','',[S],1],
[1,'Linux: System uptime',1,'24с','01:27:07','+00:00:30',[S],0],
[2,'Linux: System uptime',1,'12с','02:19:54','+00:00:30',[S],0],
[1,'Linux: Total memory',1,'22с','3.82 GB','',[M],0],
[2,'Linux: Total memory',1,'40с','1.92 GB','',[M],0],
[1,'Linux: Total swap space',1,'26с','975 MB','',[M,T],0],
[2,'Linux: Total swap space',1,'44с','975 MB','',[M,T],0],
[1,'Linux: Version of Zabbix agent running',0,'14м 17с','6.4.3','',[A],1],
[2,'Linux: Version of Zabbix agent running',0,'2м 35с','6.4.3','',[A],1],
[1,'Linux: Zabbix agent availability',1,'5с','available (1)','',[S],0],
[2,'Linux: Zabbix agent availability',1,'23с','available (1)','',[S],0],
[1,'Linux: Zabbix agent ping',1,'27с','Up (1)','',[S],0],
[2,'Linux: Zabbix agent ping',1,'45с','Up (1)','',[S],0],
[1,'RAM',0,'45с','4105293824 %','',[M],0],
[1,'RAM',0,'43с','63.9791 %','+0.05178 %',[],0],
[2,'RAM',0,'3с','2062921728 %','',[M],0],
[2,'RAM',0,'1с','36.5082 %','+0.6987 %',[],0],
[1,'sda: Disk average queue size (avgqu-sz)',1,'10с','0.0004638','+0.0004638',[T,D],0],
[2,'sda: Disk average queue size (avgqu-sz)',1,'37с','0.0001491','',[T,D],0],
[1,'sda: Disk read rate',1,'10с','0 r/s','',[T,D],0],
[2,'sda: Disk read rate',1,'37с','0 r/s','',[T,D],0],
[1,'sda: Disk read request avg waiting time (r_await)',1,'12с','0 ms','',[T,D],0],
[2,'sda: Disk read request avg waiting time (r_await)',1,'','','',[T,D],0],
[1,'sda: Disk read time (rate)',1,'10с','0','',[T,D],0],
[2,'sda: Disk read time (rate)',1,'37с','0','',[T,D],0]];
document.getElementById('rows').innerHTML=rows.map((r,k)=>`<tr${k===20?' class="hov"':''}><td><i class="cbx"></i></td><td><a class="lk">Podus-${r[0]}</a></td><td><a class="lk">${r[1]}</a>${r[2]?'<svg class="hint" width="16" height="15"><use href="#hinti"/></svg>':''}</td><td>${r[3]}</td><td>${r[4]}</td><td>${r[5]}</td><td>${r[6].map(t=>`<span class="tagx">${t}</span>`).join('')}</td><td><a class="act">${r[7]?'История':'График'}</a></td><td>${k===28?'<svg class="infox" viewBox="0 0 14 14" width="16" height="16"><path fill="#fff" d="M6 2.500h2v2H6zM6 6h2v6H6z"/></svg>':''}</td></tr>`).join('');
</script>
</body>
</html>
